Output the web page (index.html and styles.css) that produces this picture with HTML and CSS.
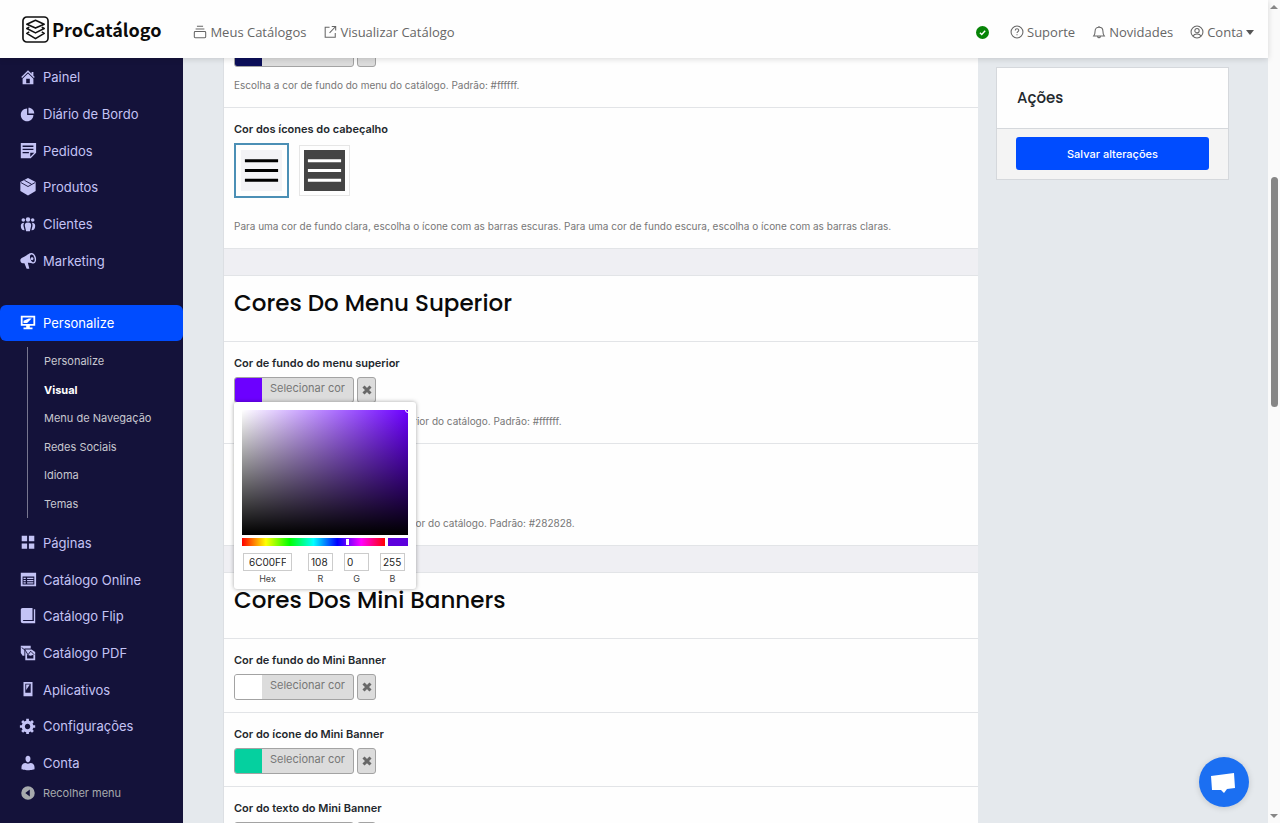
FILE: index.html
```html
<!DOCTYPE html>
<html lang="pt-BR">
<head>
    <meta charset="UTF-8">
    <title>ProCatálogo</title>
    <meta name="viewport" content="width=device-width, initial-scale=1.0">
    <link rel="stylesheet" href="styles.css">
</head>
<body>
<div class="page">
    <div class="app">
        <header class="topbar">
            <a class="logo" href="#">
                <svg viewBox="0 0 28 28" fill="none" stroke="#111" stroke-width="1.7" stroke-linejoin="round">
                    <rect x="1" y="1" width="26" height="26" rx="4"/>
                    <path d="M14 4.500l9 4-9 4-9-4z"/>
                    <path d="M7.500 11.500L5 13l9 4.500 9-4.500-2.500-1.500"/>
                    <path d="M7.500 16.500L5 18l9 5.500 9-5.500-2.500-1.500"/>
                </svg>
                <span>ProCatálogo</span>
            </a>
            <nav class="topnav">
                <a href="#">
                    <svg viewBox="0 0 16 16" fill="none" stroke="currentColor" stroke-width="1.200"><path d="M4.500 1.500h7M3 4.500h10" /><rect x="1.500" y="7.500" width="13" height="7" rx="1"/></svg>
                    Meus Catálogos
                </a>
                <a href="#">
                    <svg viewBox="0 0 16 16" fill="none" stroke="currentColor" stroke-width="1.200"><path d="M7.500 2.500H2.500v11.500h11.500V9M10 1.800h4.500v4.500M14.200 2L7.500 9"/></svg>
                    Visualizar Catálogo
                </a>
            </nav>
            <nav class="topnav topnav-right">
                <svg class="status" viewBox="0 0 16 16"><circle cx="8" cy="8" r="8" fill="#078407"/><path d="M4.800 8.200l2.300 2.300 4.200-4.600" fill="none" stroke="#fff" stroke-width="1.700"/></svg>
                <a href="#">
                    <svg viewBox="0 0 16 16" fill="none" stroke="currentColor" stroke-width="1.200"><circle cx="8" cy="8" r="6.800"/><path d="M6 6.300c0-2.700 4-2.600 4-.2 0 1.500-2 1.500-2 3.100M8 10.500v1.300"/></svg>
                    Suporte
                </a>
                <a href="#">
                    <svg viewBox="0 0 16 16" fill="none" stroke="currentColor" stroke-width="1.200"><path d="M8 1v1M2 12.500c1.200-1.500 1.500-3 1.500-5.500 0-6 9-6 9 0 0 2.500.3 4 1.500 5.500zM6.500 13c0 2 3 2 3 0"/></svg>
                    Novidades
                </a>
                <a href="#">
                    <svg viewBox="0 0 16 16" fill="none" stroke="currentColor" stroke-width="1.200"><circle cx="8" cy="8" r="6.800"/><circle cx="8" cy="6.500" r="2.500"/><path d="M3.500 12.500c1.500-3 7.500-3 9 0"/></svg>
                    Conta
                    <i class="caret"></i>
                </a>
            </nav>
        </header>

        <div class="body">
            <aside class="sidebar">
                <ul class="menu menu-top">
                    <li><a href="#"><svg viewBox="0 0 20 20"><path d="M16 8.500l1.530 1.530-1.060 1.060L10 4.600l-6.470 6.490-1.060-1.060L10 2.500l4 4v-2h2v4zm-6-2.460l6 5.990V18H4v-5.970zM12 17v-5H8v5h4z"/></svg>Painel</a></li>
                    <li><a href="#"><svg viewBox="0 0 20 20"><path d="M10.500 9.500V3c3.600 0 6.500 2.900 6.500 6.500h-6.500zM9 4v7h7c0 3.870-3.130 7-7 7s-7-3.130-7-7 3.130-7 7-7z"/></svg>Diário de Bordo</a></li>
                    <li><a href="#"><svg viewBox="0 0 20 20"><path fill-rule="evenodd" d="M2 1h17v11l-6 6H2zM4 4v1.500h12V4zM4 7.500V9h12V7.500zM4 11v1.500h7V11zM12.500 12v4.500l4.500-4.500z"/></svg>Pedidos</a></li>
                    <li><a href="#"><svg viewBox="0 0 20 20"><path d="M10 0l8.500 4.500v10L10 19.500l-8.500-5v-10z"/><path class="cut" d="M2 5l8 4.500L18 5M6 2.500l8 4.500"/></svg>Produtos</a></li>
                    <li><a href="#"><svg viewBox="0 0 20 20"><circle cx="10" cy="5" r="2.500"/><circle cx="4.800" cy="5.500" r="2"/><circle cx="15.200" cy="5.500" r="2"/><path d="M10 8.200c3 0 4 1.800 3.400 4.300l-1.300 5.500H7.900l-1.300-5.500C6 10 7 8.200 10 8.200zM5.800 8.500c-1 1.500-1 3-.6 4.500l1 4c-3 .2-4.200-2-4.200-5 0-2.300 1.500-3.500 3.800-3.500zM14.200 8.500c1 1.500 1 3 .6 4.500l-1 4c3 .2 4.200-2 4.200-5 0-2.300-1.500-3.500-3.800-3.500z"/></svg>Clientes</a></li>
                    <li><a href="#"><svg viewBox="0 0 20 20"><path d="M13 1.500C10 2 8 4.500 3.500 6.500 1.500 7.500 1 9.500 2 11c.8 1.500 2.500 1.800 4 1.500l2.500 6h3L9.800 12c2.200-.2 4 .5 5.700.5C12 10 11 5 13 1.500z"/><ellipse cx="14.800" cy="7" rx="3.200" ry="5.200" transform="rotate(-15 14.800 7)" fill="none" stroke="currentColor" stroke-width="1.600"/><circle cx="14.500" cy="7.500" r="1.600"/></svg>Marketing</a></li>
                </ul>

                <a class="menu-active" href="#"><svg viewBox="0 0 20 20"><path fill-rule="evenodd" d="M2 2h16v11h-6v2h3v2H5v-2h3v-2H2zM4 4v7h12V4z"/><path d="M5 10V7.500l6-2.500h3l-5 5z"/></svg>Personalize</a>
                <ul class="submenu">
                    <li><a href="#">Personalize</a></li>
                    <li><a class="current" href="#">Visual</a></li>
                    <li><a href="#">Menu de Navegação</a></li>
                    <li><a href="#">Redes Sociais</a></li>
                    <li><a href="#">Idioma</a></li>
                    <li><a href="#">Temas</a></li>
                </ul>

                <ul class="menu menu-bottom">
                    <li><a href="#"><svg viewBox="0 0 20 20"><path d="M3 2h6v6H3zM11 2h6v6h-6zM3 10.500h6v6H3zM11 10.500h6v6h-6z"/></svg>Páginas</a></li>
                    <li><a href="#"><svg viewBox="0 0 20 20"><path fill-rule="evenodd" d="M2 2h17v15H2zM4 6v9h13V6z"/><path d="M5 7.500h2.500V9H5zM9 7.500h7V9H9zM5 10h2.500v1.500H5zM9 10h7v1.500H9zM5 12.500h2.500V14H5zM9 12.500h7V14H9z"/></svg>Catálogo Online</a></li>
                    <li><a href="#"><svg viewBox="0 0 20 20"><path d="M4 1h11v13.500H5c-1 0-1 1 0 1h11.500V2.500H18V18H4.500C3 18 2 17 2 15.500V3c0-1.200.8-2 2-2z"/></svg>Catálogo Flip</a></li>
                    <li><a href="#"><svg viewBox="0 0 20 20"><path d="M2 2h11v3H6v8H4l-2-3z"/><path fill-rule="evenodd" d="M7 6h7l4 3v9H7zM9 12v4h7v-4l-3 1z"/><path class="cut" d="M3 4l4 3 3 5 3-4 4 4"/></svg>Catálogo PDF</a></li>
                    <li><a href="#"><svg viewBox="0 0 20 20"><path fill-rule="evenodd" d="M5 1h10v16H5zM7 3v10h6V3z"/><path d="M8 4h4l-4 6z"/></svg>Aplicativos</a></li>
                    <li><a href="#"><svg viewBox="0 0 20 20"><path d="M18 12h-2.180c-.17.7-.44 1.350-.81 1.930l1.540 1.540-2.100 2.100-1.540-1.540c-.58.36-1.230.63-1.910.79V19H8v-2.180c-.68-.16-1.330-.43-1.910-.79l-1.540 1.540-2.120-2.120 1.540-1.540c-.36-.58-.63-1.230-.79-1.910H1V9.030h2.170c.16-.7.44-1.350.8-1.940L2.430 5.550l2.100-2.100 1.540 1.540c.58-.37 1.240-.64 1.930-.81V2h3v2.180c.68.16 1.330.43 1.910.79l1.540-1.540 2.120 2.120-1.540 1.540c.36.59.64 1.240.8 1.940H18V12zm-8.500 1.500c1.660 0 3-1.340 3-3s-1.340-3-3-3-3 1.340-3 3 1.340 3 3 3z"/></svg>Configurações</a></li>
                    <li><a href="#"><svg viewBox="0 0 20 20"><path d="M10 9.250c-2.270 0-2.730-3.440-2.730-3.440C7 4.020 7.820 2 9.970 2c2.160 0 2.980 2.020 2.710 3.810 0 0-.41 3.440-2.680 3.440zm0 1.500L12.720 10c2.890 0 4.520 2.330 4.520 4.530v2.490s-3.650 1.130-7.240 1.130c-3.650 0-7.240-1.130-7.240-1.130v-2.490c0-2.250 1.640-4.480 4.470-4.480z"/></svg>Conta</a></li>
                </ul>
                <button class="collapse" type="button"><svg viewBox="0 0 20 20"><path fill-rule="evenodd" d="M10 2.500a7.500 7.500 0 1 1 0 15 7.500 7.500 0 0 1 0-15zM12 6l-5 4 5 4z"/></svg>Recolher menu</button>
            </aside>

            <main class="content">
                <form class="panel">
                    <div class="field">
                        <div class="picker">
                            <button class="color-btn" type="button" aria-label="Selecionar cor"><i class="swatch navy"></i></button>
                            <button class="clear-btn" type="button" aria-label="Limpar"></button>
                        </div>
                        <p>Escolha a cor de fundo do menu do catálogo. Padrão: #ffffff.</p>
                    </div>

                    <fieldset class="field">
                        <legend>Cor dos ícones do cabeçalho</legend>
                        <div class="icon-choices">
                            <label class="choice">
                                <input type="radio" name="icone" aria-label="Barras escuras" checked>
                                <svg viewBox="0 0 42 42"><rect width="42" height="42" fill="#f3f3f6"/><path d="M4 11h34M4 21h34M4 31h34" stroke="#000" stroke-width="3"/></svg>
                            </label>
                            <label class="choice">
                                <input type="radio" name="icone" aria-label="Barras claras">
                                <svg viewBox="0 0 42 42"><rect width="42" height="42" fill="#444"/><path d="M4 11h34M4 21h34M4 31h34" stroke="#fff" stroke-width="3"/></svg>
                            </label>
                        </div>
                        <p>Para uma cor de fundo clara, escolha o ícone com as barras escuras. Para uma cor de fundo escura, escolha o ícone com as barras claras.</p>
                    </fieldset>

                    <div class="divider"></div>
                    <h2>Cores Do Menu Superior</h2>

                    <div class="field">
                        <label for="fundo-menu">Cor de fundo do menu superior</label>
                        <div class="picker">
                            <button class="color-btn" id="fundo-menu" type="button"><i class="swatch purple"></i><span>Selecionar cor</span></button>
                            <button class="clear-btn" type="button" aria-label="Limpar"><svg viewBox="0 0 10 10"><path d="M1.500 1.500l7 7M8.500 1.500l-7 7"/></svg></button>
                            <div class="popup">
                                <div class="spectrum"><i class="handle"></i></div>
                                <div class="hue-row">
                                    <div class="hue"><i class="hue-handle"></i></div>
                                    <i class="preview"></i>
                                </div>
                                <div class="values">
                                    <label class="hex"><input type="text" value="6C00FF">Hex</label>
                                    <label><input type="text" value="108">R</label>
                                    <label><input type="text" value="0">G</label>
                                    <label><input type="text" value="255">B</label>
                                </div>
                            </div>
                        </div>
                        <p>Escolha a cor de fundo do menu superior do catálogo. Padrão: #ffffff.</p>
                    </div>

                    <div class="field">
                        <label for="texto-menu">Cor do texto do menu</label>
                        <div class="picker">
                            <button class="color-btn" id="texto-menu" type="button"><i class="swatch white"></i><span>Selecionar cor</span></button>
                            <button class="clear-btn" type="button" aria-label="Limpar"><svg viewBox="0 0 10 10"><path d="M1.500 1.500l7 7M8.500 1.500l-7 7"/></svg></button>
                        </div>
                        <p>Escolha a cor do texto do menu superior do catálogo. Padrão: #282828.</p>
                    </div>

                    <div class="divider"></div>
                    <h2>Cores Dos Mini Banners</h2>

                    <div class="field">
                        <label for="fundo-banner">Cor de fundo do Mini Banner</label>
                        <div class="picker">
                            <button class="color-btn" id="fundo-banner" type="button"><i class="swatch white"></i><span>Selecionar cor</span></button>
                            <button class="clear-btn" type="button" aria-label="Limpar"><svg viewBox="0 0 10 10"><path d="M1.500 1.500l7 7M8.500 1.500l-7 7"/></svg></button>
                        </div>
                    </div>
                    <div class="field">
                        <label for="icone-banner">Cor do ícone do Mini Banner</label>
                        <div class="picker">
                            <button class="color-btn" id="icone-banner" type="button"><i class="swatch green"></i><span>Selecionar cor</span></button>
                            <button class="clear-btn" type="button" aria-label="Limpar"><svg viewBox="0 0 10 10"><path d="M1.500 1.500l7 7M8.500 1.500l-7 7"/></svg></button>
                        </div>
                    </div>
                    <div class="field">
                        <label for="texto-banner">Cor do texto do Mini Banner</label>
                        <div class="picker">
                            <button class="color-btn" id="texto-banner" type="button"><i class="swatch navy"></i></button>
                            <button class="clear-btn" type="button" aria-label="Limpar"></button>
                        </div>
                    </div>
                </form>

                <section class="actions">
                    <h3>Ações</h3>
                    <div class="actions-footer">
                        <button type="button">Salvar alterações</button>
                    </div>
                </section>
            </main>
        </div>
    </div>

    <div class="scrollbar">
        <i class="arrow up"></i>
        <i class="thumb"></i>
        <i class="arrow down"></i>
    </div>
</div>

<button class="chat" type="button" aria-label="Chat">
    <svg viewBox="0 0 50 50"><path d="M12 19l23-3 1 15-8 1-3 4-3-3-9 0z" fill="#fff"/></svg>
</button>
</body>
</html>
```
FILE: styles.css
```css
* {
    box-sizing: border-box;
    margin: 0;
    padding: 0;
}

body {
    font-family: Inter, "Liberation Sans", sans-serif;
    font-size: 11px;
    line-height: 20px;
    color: #23282d;
    overflow: hidden;
}

a {
    text-decoration: none;
    color: inherit;
}

ul {
    list-style: none;
}

button {
    border: 0;
    font-family: inherit;
    cursor: pointer;
}

.page {
    display: flex;
    height: 100vh;
}

.app {
    flex: 1;
    min-width: 0;
    display: flex;
    flex-direction: column;
}

/* top bar */
.topbar {
    position: relative;
    z-index: 2;
    flex: none;
    display: flex;
    align-items: center;
    height: 58px;
    padding: 0 14px 0 22px;
    background: #fefefe;
    box-shadow: 0 1px 6px rgba(0, 0, 0, .15);
}

.logo {
    display: flex;
    align-items: center;
    gap: 3px;
    color: #0b0b0b;
    font-family: "Noto Sans CJK SC", sans-serif;
    font-size: 18px;
    font-weight: 700;
}

.logo svg {
    width: 27px;
    height: 27px;
}

.topnav {
    display: flex;
    align-items: center;
    gap: 17px;
    margin-left: 32px;
    padding-top: 6px;
    font-family: "Open Sans", "Noto Sans", sans-serif;
    font-size: 13px;
    color: #666;
}

.topnav a {
    display: flex;
    align-items: center;
    gap: 3px;
}

.topnav svg {
    width: 14px;
    height: 14px;
}

.topnav-right {
    margin-left: auto;
}

.topnav .status {
    width: 13px;
    height: 13px;
    margin-right: 4px;
}

.caret {
    border: 4px solid transparent;
    border-top: 5px solid #555;
    border-bottom: 0;
}

/* side menu */
.body {
    flex: 1;
    display: flex;
    min-height: 0;
}

.sidebar {
    flex: none;
    width: 183px;
    padding-top: 1px;
    background: #14123a;
    color: #c4c3f5;
    font-size: 13px;
    overflow: hidden;
}

.sidebar svg {
    width: 18px;
    height: 18px;
    fill: currentColor;
}

.sidebar .cut {
    fill: none;
    stroke: #14123a;
}

.menu {
    display: grid;
    grid-auto-rows: 1fr;
}

.menu-top {
    height: 220px;
}

.menu-bottom {
    height: 256px;
    margin-top: 7px;
}

.menu a,
.menu-active,
.collapse {
    display: flex;
    align-items: center;
    gap: 6px;
    height: 100%;
    padding-left: 19px;
}

.menu-active {
    height: 36px;
    margin-top: 26px;
    border-radius: 6px;
    background: #004cff;
    color: #fff;
}

.submenu {
    display: grid;
    grid-auto-rows: 1fr;
    align-items: center;
    height: 171px;
    margin: 6px 0 0 27px;
    padding-left: 16px;
    border-left: 1px solid #77768f;
    color: #c8c8d0;
    font-size: 11px;
}

.submenu .current {
    color: #fff;
    font-weight: 700;
}

.collapse {
    height: 24px;
    background: none;
    color: #a7aaad;
    font-size: 11px;
}

/* content */
.content {
    flex: 1;
    display: flex;
    align-items: flex-start;
    gap: 18px;
    min-width: 0;
    padding: 0 39px 0 40px;
    background: #e5e9ed;
    overflow: hidden;
}

.panel {
    flex: 1;
    min-width: 0;
    margin-top: -29px;
    border-left: 1px solid #dcdfe3;
    background: #fefefe;
}

.field {
    padding: 11px 10px 12px;
    border: 0;
    border-top: 1px solid #e2e4e7;
}

.field > label,
.field legend {
    display: block;
    float: left;
    width: 100%;
    margin-bottom: 4px;
    font-weight: 600;
}

.field p {
    margin-top: 8px;
    color: #777;
    font-size: 10px;
}

.picker {
    clear: both;
    position: relative;
    display: flex;
    gap: 3px;
}

.color-btn {
    display: flex;
    width: 120px;
    height: 26px;
    border: 1px solid #a3a3a3;
    border-radius: 3px;
    background: #dcdcdc;
    color: #777;
    font-size: 11px;
    line-height: 20px;
    overflow: hidden;
}

.color-btn span {
    flex: 1;
}

.swatch {
    width: 27px;
    height: 24px;
}

.navy {
    background: #0c0f5a;
}

.purple {
    background: #6c00ff;
}

.white {
    background: #fff;
}

.green {
    background: #05d09f;
}

.clear-btn {
    display: flex;
    align-items: center;
    justify-content: center;
    width: 19px;
    height: 26px;
    border: 1px solid #a3a3a3;
    border-radius: 3px;
    background: #dcdcdc;
}

.clear-btn svg {
    width: 10px;
    height: 10px;
    stroke: #686868;
    stroke-width: 3;
}

.icon-choices {
    clear: both;
    display: flex;
    align-items: center;
    gap: 10px;
    height: 55px;
}

.icon-choices + p {
    margin-top: 18px;
}

.choice {
    display: flex;
    padding: 4px;
    border: 1px solid #e6e6e6;
}

.choice:has(:checked) {
    padding: 5px;
    border: 2px solid #4b8fb5;
}

.choice input {
    position: absolute;
    opacity: 0;
}

.choice svg {
    width: 41px;
    height: 41px;
}

.divider {
    height: 27px;
    border-top: 1px solid #e2e4e7;
    background: #efeff3;
}

h2 {
    height: 66px;
    padding: 12px 10px;
    border-top: 1px solid #e2e4e7;
    color: #0a0a0a;
    font-family: Poppins, Inter, sans-serif;
    font-size: 23px;
    font-weight: 500;
    line-height: 30px;
}

/* colour popup */
.popup {
    position: absolute;
    z-index: 1;
    top: 25px;
    left: 0;
    width: 182px;
    padding: 8px 8px 2px;
    border-radius: 3px;
    background: #fff;
    box-shadow: 0 0 4px rgba(0, 0, 0, .35);
}

.spectrum {
    position: relative;
    height: 125px;
    background: linear-gradient(to top, #000, transparent), linear-gradient(to right, #fff, #6c00ff);
    overflow: hidden;
}

.handle {
    position: absolute;
    top: -3px;
    right: -3px;
    width: 6px;
    height: 6px;
    border: 1px solid #fff;
    border-radius: 50%;
}

.hue-row {
    display: flex;
    gap: 3px;
    height: 8px;
    margin: 3px 0 7px;
}

.hue {
    position: relative;
    flex: 1;
    background: linear-gradient(to right, red, yellow, lime, cyan, blue, magenta, red);
}

.hue-handle {
    position: absolute;
    top: 1px;
    left: 104px;
    width: 3px;
    height: 6px;
    background: #fff;
}

.preview {
    width: 20px;
    background: #5c00dc;
}

.values {
    display: flex;
    gap: 11px;
    padding-left: 1px;
}

.values label {
    width: 25px;
    color: #444;
    font-size: 9px;
    line-height: 16px;
    text-align: center;
    text-indent: 4px;
}

.values .hex {
    width: 49px;
    margin-right: 5px;
    text-indent: 10px;
}

.values input {
    display: block;
    width: 100%;
    height: 18px;
    padding: 0 2px;
    border: 1px solid #ccc;
    color: #222;
    font-family: inherit;
    font-size: 10px;
    text-indent: 0;
}

.values .hex input {
    padding: 0 5px;
}

/* actions box */
.actions {
    flex: none;
    width: 233px;
    margin-top: 9px;
    border: 1px solid #d5d8dc;
    background: #fefefe;
}

.actions h3 {
    padding: 20px;
    font-family: Poppins, Inter, sans-serif;
    font-size: 15px;
    font-weight: 500;
}

.actions-footer {
    padding: 8px 19px 9px;
    border-top: 1px solid #d5d8dc;
    background: #f4f4f4;
}

.actions-footer button {
    width: 100%;
    height: 33px;
    border-radius: 3px;
    background: #004cff;
    color: #fff;
    font-size: 11px;
    font-weight: 500;
}

/* scrollbar */
.scrollbar {
    flex: none;
    display: flex;
    flex-direction: column;
    align-items: center;
    width: 12px;
    padding: 5px 0;
    background: #fafafa;
}

.thumb {
    width: 7px;
    height: 230px;
    margin-top: 168px;
    border-radius: 4px;
    background: #868686;
}

.arrow {
    border: 4px solid transparent;
}

.up {
    border-top: 0;
    border-bottom-color: #868686;
}

.down {
    margin-top: auto;
    border-bottom: 0;
    border-top-color: #868686;
}

.chat {
    position: fixed;
    z-index: 3;
    right: 31px;
    bottom: 16px;
    width: 50px;
    height: 50px;
    border-radius: 50%;
    background: #1b6ff2;
    box-shadow: 0 1px 6px rgba(0, 0, 0, .15);
}
```
